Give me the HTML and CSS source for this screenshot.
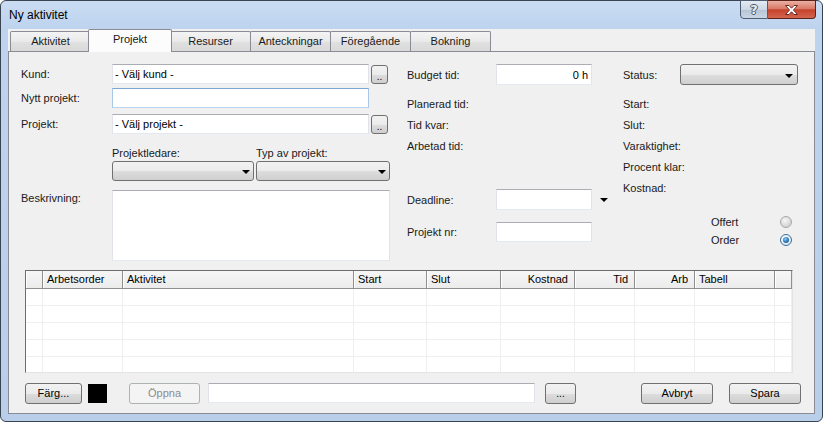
FILE: index.html
```html
<!DOCTYPE html>
<html lang="sv">

<head>
  <meta charset="UTF-8">
  <meta name="viewport" content="width=device-width, initial-scale=1.0">
  <title>Ny aktivitet</title>
  <link rel="stylesheet" href="styles.css">
</head>

<body>
  <div class="window">
    <div class="titlebar">
      <div class="title">Ny aktivitet</div>
      <div class="caption">
        <div class="cap help">?</div>
        <div class="cap close">
          <svg width="15" height="12" viewBox="0 0 15 12">
            <path d="M1.5 1.5 L5 1.5 L7.5 4.2 L10 1.5 L13.5 1.5 L9.5 6 L13.5 10.5 L10 10.5 L7.5 7.8 L5 10.5 L1.5 10.5 L5.5 6 Z" fill="#fff" stroke="#6b2b20" stroke-width="1" stroke-linejoin="round" />
          </svg>
        </div>
      </div>
    </div>

    <div class="client">
      <div class="tabs">
        <div class="tab">Aktivitet</div>
        <div class="tab active">Projekt</div>
        <div class="tab">Resurser</div>
        <div class="tab">Anteckningar</div>
        <div class="tab">Föregående</div>
        <div class="tab">Bokning</div>
      </div>

      <div class="page">
        <div class="top">
          <div class="col-left">
            <div class="row">
              <label>Kund:</label>
              <input class="text wide" value="- Välj kund -">
              <button class="btn dots">..</button>
            </div>
            <div class="row r-new">
              <label>Nytt projekt:</label>
              <input class="text wide focus">
            </div>
            <div class="row r-proj">
              <label>Projekt:</label>
              <input class="text wide" value="- Välj projekt -">
              <button class="btn dots">..</button>
            </div>
            <div class="pair">
              <div class="pair-item">
                <div class="pair-label">Projektledare:</div>
                <div class="combo"></div>
              </div>
              <div class="pair-item">
                <div class="pair-label">Typ av projekt:</div>
                <div class="combo"></div>
              </div>
            </div>
            <div class="row r-desc">
              <label>Beskrivning:</label>
              <textarea class="text"></textarea>
            </div>
          </div>

          <div class="col-mid">
            <div class="row">
              <label>Budget tid:</label>
              <input class="text num" value="0 h">
            </div>
            <div class="info first">Planerad tid:</div>
            <div class="info">Tid kvar:</div>
            <div class="info">Arbetad tid:</div>
            <div class="row r-deadline">
              <label>Deadline:</label>
              <input class="text">
              <span class="arrow"></span>
            </div>
            <div class="row r-nr">
              <label>Projekt nr:</label>
              <input class="text">
            </div>
          </div>

          <div class="col-right">
            <div class="row">
              <label>Status:</label>
              <div class="combo"></div>
            </div>
            <div class="info first">Start:</div>
            <div class="info">Slut:</div>
            <div class="info">Varaktighet:</div>
            <div class="info">Procent klar:</div>
            <div class="info">Kostnad:</div>
            <div class="radios">
              <div class="radio-row">Offert<span class="radio"></span></div>
              <div class="radio-row">Order<span class="radio checked"></span></div>
            </div>
          </div>
        </div>

        <div class="grid">
          <div class="grid-row grid-head">
            <span></span>
            <span>Arbetsorder</span>
            <span>Aktivitet</span>
            <span>Start</span>
            <span>Slut</span>
            <span class="right">Kostnad</span>
            <span class="right">Tid</span>
            <span class="right">Arb</span>
            <span>Tabell</span>
            <span></span>
          </div>
          <div class="grid-row"><span></span><span></span><span></span><span></span><span></span><span></span><span></span><span></span><span></span><span></span></div>
          <div class="grid-row"><span></span><span></span><span></span><span></span><span></span><span></span><span></span><span></span><span></span><span></span></div>
          <div class="grid-row"><span></span><span></span><span></span><span></span><span></span><span></span><span></span><span></span><span></span><span></span></div>
          <div class="grid-row"><span></span><span></span><span></span><span></span><span></span><span></span><span></span><span></span><span></span><span></span></div>
          <div class="grid-row"><span></span><span></span><span></span><span></span><span></span><span></span><span></span><span></span><span></span><span></span></div>
        </div>

        <div class="bottom">
          <button class="btn btn-farg">Färg...</button>
          <div class="swatch"></div>
          <button class="btn btn-open" disabled>Öppna</button>
          <input class="text path">
          <button class="btn btn-browse">...</button>
          <button class="btn btn-cancel">Avbryt</button>
          <button class="btn btn-save">Spara</button>
        </div>
      </div>
    </div>
  </div>
</body>

</html>
```

FILE: styles.css
```css
html,
body {
  margin: 0;
  padding: 0;
}

body {
  font: 11px "Liberation Sans", Arial, sans-serif;
  color: #1a1a1a;
  background: #fff;
}

/* window frame */
.window {
  width: 823px;
  height: 422px;
  box-sizing: border-box;
  border: 1px solid #3a4352;
  border-radius: 6px;
  padding: 0 7px 7px;
  display: flex;
  flex-direction: column;
  background: linear-gradient(180deg, #cadcf2 0px, #bdd3ee 28px, #b8cee9 100%);
}

.titlebar {
  height: 28px;
  display: flex;
  align-items: flex-start;
}

.title {
  font-size: 12px;
  padding: 7px 0 0 1px;
  color: #000;
}

.caption {
  display: flex;
  margin: -1px -1px 0 auto;
}

.cap {
  height: 19px;
  box-sizing: border-box;
  border: 1px solid #4e5d73;
  display: flex;
  align-items: center;
  justify-content: center;
}

.help {
  width: 28px;
  border-radius: 0 0 0 4px;
  background: linear-gradient(#e4ebf3, #ccd8e5 50%, #b5c4d5 51%, #c9d6e4);
  color: #e9eef4;
  font: bold 13px "DejaVu Sans", sans-serif;
  text-shadow: 1px 0 #4a586c, -1px 0 #4a586c, 0 1px #4a586c, 0 -1px #4a586c;
}

.close {
  width: 48px;
  border-color: #5b2219;
  border-left: none;
  border-radius: 0 0 4px 0;
  background: linear-gradient(#eab0a3, #d97a67 45%, #c6412c 52%, #d4664f);
}

/* client + tabs */
.client {
  flex: 1;
  display: flex;
  flex-direction: column;
  background: #f0f0f0;
}

.tabs {
  height: 22px;
  display: flex;
  align-items: flex-end;
  padding-left: 2px;
}

.tab {
  width: 81px;
  height: 20px;
  box-sizing: border-box;
  margin-right: -1px;
  border: 1px solid #898c95;
  border-bottom: none;
  border-radius: 2px 2px 0 0;
  background: linear-gradient(#f4f4f4, #e9e9e9 50%, #e0e0e0 51%, #d9d9d9);
  text-align: center;
  line-height: 19px;
}

.tab.active {
  width: 84px;
  height: 23px;
  margin: 0 -2px -1px -2px;
  background: #fcfcfc;
  line-height: 18px;
  position: relative;
  z-index: 1;
}

.page {
  flex: 1;
  border: 1px solid #898c95;
  background: #f0f0f0;
}

/* form */
.top {
  display: flex;
  padding: 12px 0 0 12px;
}

.col-left {
  width: 369px;
}

.col-mid {
  width: 216px;
  margin-left: 17px;
}

.col-right {
  width: 175px;
}

.row {
  display: flex;
  align-items: center;
}

.row label {
  flex: none;
}

.col-left label {
  width: 91px;
}

.col-mid label {
  width: 89px;
}

.col-right label {
  width: 57px;
}

.text {
  box-sizing: border-box;
  height: 20px;
  margin: 0;
  padding: 0 2px;
  font: inherit;
  color: #000;
  border: 1px solid;
  border-color: #abadb3 #e2e3ea #e3e9ef #e2e3ea;
  background: #fff;
  outline: none;
}

.wide {
  width: 257px;
}

.focus {
  border-color: #7ea6d2 #a9c8e8 #b7d5ef #a9c8e8;
}

.r-new {
  margin-top: 4px;
}

.r-proj {
  margin-top: 6px;
}

.btn {
  box-sizing: border-box;
  margin: 0;
  padding: 0;
  font: inherit;
  color: #000;
  border: 1px solid #707070;
  border-radius: 3px;
  background: linear-gradient(#f2f2f2, #ebebeb 50%, #dddddd 51%, #cfcfcf);
}

.dots {
  width: 17px;
  height: 19px;
  margin-left: 2px;
  font-size: 10px;
  line-height: 10px;
  padding-top: 5px;
}

.combo {
  box-sizing: border-box;
  height: 20px;
  border: 1px solid #707070;
  border-radius: 3px;
  background: linear-gradient(#f2f2f2, #ebebeb 50%, #dddddd 51%, #cfcfcf);
  position: relative;
}

.combo::after,
.arrow {
  content: "";
  width: 0;
  height: 0;
  border-left: 4px solid transparent;
  border-right: 4px solid transparent;
  border-top: 4px solid #000;
}

.combo::after {
  position: absolute;
  right: 3px;
  top: 8px;
}

.pair {
  display: flex;
  margin: 12px 0 0 91px;
}

.pair-label {
  line-height: 14px;
  margin-bottom: 1px;
}

.pair-item:first-child {
  width: 144px;
}

.pair-item:first-child .combo {
  width: 142px;
}

.pair-item:last-child .combo {
  width: 134px;
}

.r-desc {
  align-items: flex-start;
  margin-top: 9px;
}

.r-desc label {
  line-height: 14px;
  padding-top: 1px;
}

textarea.text {
  width: 278px;
  height: 71px;
  resize: none;
}

.col-mid .text {
  width: 96px;
  height: 21px;
}

.num {
  text-align: right;
  padding-right: 3px;
}

.info {
  line-height: 21px;
}

.info.first {
  margin-top: 9px;
}

.r-deadline {
  margin-top: 32px;
}

.arrow {
  margin-left: 8px;
}

.r-nr {
  margin-top: 12px;
}

.col-mid .r-nr .text {
  height: 20px;
}

.col-right .combo {
  width: 118px;
  height: 21px;
}

.col-right .combo::after {
  top: 9px;
  right: 4px;
}

.radios {
  margin-top: 14px;
  padding-left: 88px;
}

.radio-row {
  display: flex;
  align-items: center;
  height: 18px;
  padding-right: 6px;
}

.radio {
  margin-left: auto;
  width: 12px;
  height: 12px;
  box-sizing: border-box;
  border-radius: 50%;
  border: 1px solid #a7a7a7;
  background: radial-gradient(circle at 40% 35%, #f6f6f6, #d4d4d4 70%);
  position: relative;
}

.radio.checked {
  border-color: #3c6e98;
  background: radial-gradient(circle at 40% 35%, #ffffff, #dde9f4 70%);
}

.radio.checked::after {
  content: "";
  position: absolute;
  left: 2px;
  top: 2px;
  width: 6px;
  height: 6px;
  border-radius: 50%;
  background: radial-gradient(circle at 40% 35%, #8fd0f6, #2a74b5 55%, #174a7a);
}

/* data grid */
.grid {
  margin: 9px 0 0 16px;
  width: 768px;
  height: 103px;
  box-sizing: border-box;
  border-top: 1px solid #6d6d6d;
  border-left: 1px solid #6d6d6d;
  border-right: 1px solid #e3e3e3;
  border-bottom: 1px solid #e3e3e3;
  background: #fff;
  overflow: hidden;
}

.grid-row {
  display: grid;
  grid-template-columns: 17px 80px 231px 73px 74px 74px 60px 60px 80px 17px;
  height: 17px;
}

.grid-row span {
  box-sizing: border-box;
  border-right: 1px solid #efefef;
  border-bottom: 1px solid #efefef;
}

.grid-head {
  height: 18px;
  background: linear-gradient(#f6f6f6, #ebebeb);
}

.grid-head span {
  border-right: 1px solid #8f8f8f;
  border-bottom: 1px solid #8f8f8f;
  box-shadow: inset 1px 0 #fff;
  padding: 0 6px 0 4px;
  line-height: 17px;
  color: #000;
}

.grid-head span.right {
  text-align: right;
}

/* bottom bar */
.bottom {
  display: flex;
  align-items: center;
  height: 22px;
  margin: 9px 0 0 16px;
}

.bottom .btn {
  height: 21px;
}

.btn-farg {
  width: 57px;
}

.swatch {
  width: 19px;
  height: 19px;
  margin-left: 6px;
  background: #000;
}

.btn-open {
  width: 71px;
  margin-left: 22px;
}

.btn-open:disabled {
  color: #8d8d8d;
  border-color: #adb2b5;
  background: #f4f4f4;
}

.path {
  width: 327px;
  margin-left: 8px;
}

.btn-browse {
  width: 31px;
  margin-left: 10px;
  font-size: 10px;
}

.btn-cancel {
  width: 72px;
  margin-left: 65px;
}

.btn-save {
  width: 72px;
  margin-left: 16px;
}
```
